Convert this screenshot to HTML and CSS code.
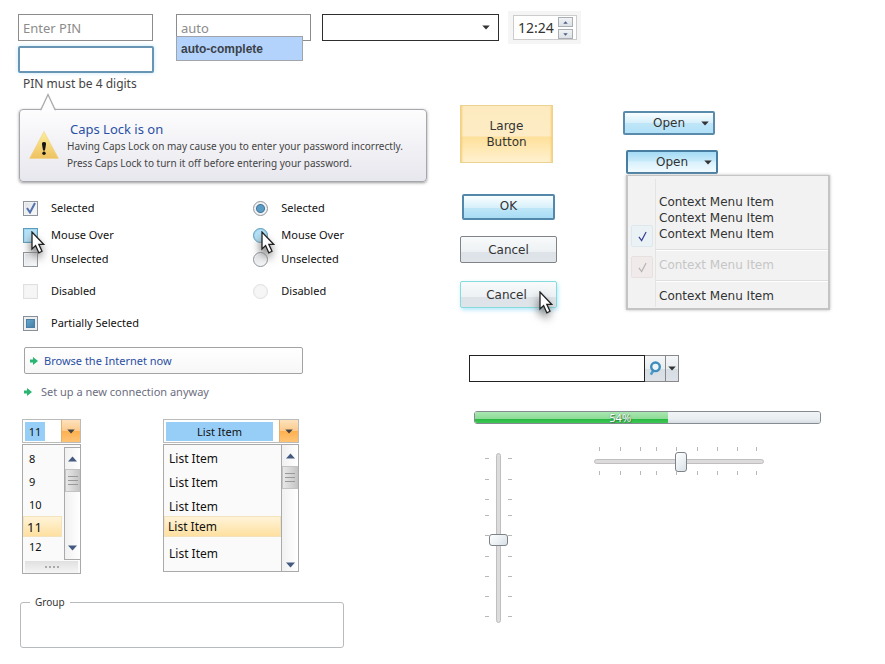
FILE: index.html
```html
<!DOCTYPE html>
<html lang="en">
<head>
<meta charset="utf-8">
<title>Interface controls</title>
<meta name="viewport" content="width=device-width, initial-scale=1">
<link rel="stylesheet" href="styles.css">
</head>
<body>
<svg class="defs" aria-hidden="true">
  <defs>
    <symbol id="down" viewBox="0 0 9 6"><path d="M0 .5h9L4.500 5.500z"/></symbol>
    <symbol id="up" viewBox="0 0 9 6"><path d="M0 5.500h9L4.500 .5z"/></symbol>
    <symbol id="cursor" viewBox="0 0 14 24"><path d="M1 1v17l3.600-3.500 3.200 7.300 3.200-1.500-3.200-7H12.600z" fill="#fff" stroke="#222" stroke-width="1.300"/></symbol>
    <symbol id="arrow" viewBox="0 0 8 8"><path d="M0 2.500h3V0L8 4 3 8V5.500H0z" fill="#2bb573"/></symbol>
    <symbol id="tick" viewBox="0 0 10 12"><path d="M1 6.500l3 4L9 1" fill="none" stroke="currentColor" stroke-width="1.300"/></symbol>
    <symbol id="bold-tick" viewBox="0 0 10 12"><path d="M1 6l3 4.500L9 1" fill="none" stroke="currentColor" stroke-width="2"/></symbol>
  </defs>
</svg>

<header class="top">
  <div class="pin">
    <input class="field" type="text" placeholder="Enter PIN" aria-label="PIN">
    <input class="field focused" id="pin" type="text" aria-describedby="hint" aria-label="PIN again">
    <label class="hint" id="hint" for="pin">PIN must be 4 digits</label>
  </div>
  <div class="auto">
    <input class="field" type="text" placeholder="auto" aria-label="Search word">
    <button class="suggestion" type="button">auto-complete</button>
  </div>
  <div class="combo">
    <select aria-label="Choice"><option></option></select>
    <svg class="caret"><use href="#down"/></svg>
  </div>
  <div class="time">
    <div class="time-box">
      <input type="text" value="12:24" aria-label="Time">
      <div class="spin">
        <button type="button" aria-label="Later"><svg><use href="#up"/></svg></button>
        <button type="button" aria-label="Earlier"><svg><use href="#down"/></svg></button>
      </div>
    </div>
  </div>
</header>

<main class="board">
  <div class="left">
    <section class="callout">
      <svg class="peak" viewBox="0 0 18 18" aria-hidden="true"><path d="M1 18L2 16.500 9 1.500 16 16.500 17 18z" fill="#fdfdfe"/><path d="M1 16.500h1L9 1.500l7 15h1" fill="none" stroke="#aaa" stroke-width="1.300"/></svg>
      <svg class="warning" viewBox="0 0 30 28" aria-hidden="true">
        <defs><linearGradient id="gold" x2="0" y2="1"><stop stop-color="#fbee9a"/><stop offset="1" stop-color="#efc160"/></linearGradient></defs>
        <path d="M15 .5L29.500 27.500H.5z" fill="url(#gold)" stroke="#efd384" stroke-width=".6"/>
        <path d="M15 11c2 0 2.200 1.300 1.900 3l-1 5.500h-1.800l-1-5.500c-.3-1.700-.1-3 1.900-3z" fill="#151515"/><circle cx="15" cy="22.300" r="1.700" fill="#151515"/>
      </svg>
      <div>
        <h2>Caps Lock is on</h2>
        <p>Having Caps Lock on may cause you to enter your password incorrectly.</p>
        <p>Press Caps Lock to turn it off before entering your password.</p>
      </div>
    </section>

    <div class="choices">
      <div class="choice-list">
        <label><span class="mark"><input type="checkbox" checked><svg class="check"><use href="#bold-tick"/></svg></span>Selected</label>
        <label class="near"><span class="mark"><input class="hover" type="checkbox"><svg class="cursor"><use href="#cursor"/></svg></span>Mouse Over</label>
        <label><span class="mark"><input type="checkbox"></span>Unselected</label>
        <label class="apart"><span class="mark"><input type="checkbox" disabled></span>Disabled</label>
        <label class="apart"><span class="mark"><input class="partial" type="checkbox"></span>Partially Selected</label>
      </div>
      <div class="choice-list">
        <label><span class="mark"><input type="radio" name="r" checked></span>Selected</label>
        <label class="near"><span class="mark"><input class="hover" type="radio" name="r"><svg class="cursor"><use href="#cursor"/></svg></span>Mouse Over</label>
        <label><span class="mark"><input type="radio" name="r"></span>Unselected</label>
        <label class="apart"><span class="mark"><input type="radio" name="r" disabled></span>Disabled</label>
      </div>
    </div>

    <a class="command boxed" href="#"><svg><use href="#arrow"/></svg>Browse the Internet now</a>
    <a class="command" href="#"><svg><use href="#arrow"/></svg>Set up a new connection anyway</a>

    <div class="lists">
      <div class="drop small">
        <div class="drop-head"><input type="text" value="11" aria-label="Size"><button type="button" aria-label="Show sizes"><svg><use href="#down"/></svg></button></div>
        <div class="panel">
          <div class="panel-body">
            <ul role="listbox" aria-label="Sizes">
              <li role="option">8</li><li role="option">9</li><li role="option">10</li><li role="option" class="chosen" aria-selected="true">11</li><li role="option">12</li>
            </ul>
            <div class="scroll"><button type="button" aria-label="Up"><svg><use href="#up"/></svg></button><span class="handle"></span><button class="end" type="button" aria-label="Down"><svg><use href="#down"/></svg></button></div>
          </div>
          <div class="grip"><i></i><i></i><i></i><i></i></div>
        </div>
      </div>
      <div class="drop wide">
        <div class="drop-head"><input type="text" value="List Item" aria-label="Item"><button type="button" aria-label="Show items"><svg><use href="#down"/></svg></button></div>
        <div class="panel">
          <div class="panel-body">
            <ul role="listbox" aria-label="Items">
              <li role="option">List Item</li><li role="option">List Item</li><li role="option">List Item</li><li role="option" class="chosen" aria-selected="true">List Item</li><li role="option">List Item</li>
            </ul>
            <div class="scroll"><button type="button" aria-label="Up"><svg><use href="#up"/></svg></button><span class="handle"></span><button class="end" type="button" aria-label="Down"><svg><use href="#down"/></svg></button></div>
          </div>
        </div>
      </div>
    </div>

    <fieldset class="group"><legend>Group</legend></fieldset>
  </div>

  <div class="right">
    <div class="actions">
      <div class="buttons">
        <button class="large" type="button">Large<br>Button</button>
        <button class="btn primary" type="button">OK</button>
        <button class="btn" type="button">Cancel</button>
        <button class="btn glow" type="button">Cancel<svg class="cursor"><use href="#cursor"/></svg></button>
      </div>
      <div class="menus">
        <button class="open" type="button">Open<svg class="caret"><use href="#down"/></svg></button>
        <div class="opened">
          <button class="open pressed" type="button">Open<svg class="caret"><use href="#down"/></svg></button>
          <ul class="menu">
            <li><button type="button">Context Menu Item</button></li>
            <li><button type="button">Context Menu Item</button></li>
            <li><span class="state"><svg><use href="#tick"/></svg></span><button type="button">Context Menu Item</button></li>
            <li class="rule"></li>
            <li><span class="state off"><svg><use href="#tick"/></svg></span><button type="button" disabled>Context Menu Item</button></li>
            <li class="rule"></li>
            <li><button type="button">Context Menu Item</button></li>
          </ul>
        </div>
      </div>
    </div>

    <form class="search">
      <input type="text" aria-label="Search">
      <button type="button" aria-label="Search"><svg class="lens" viewBox="0 0 12 15"><path d="M4.500 9.300L1.800 13.600" stroke="#4c9cc8" stroke-width="2.600"/><circle cx="6.500" cy="5.800" r="4.300" fill="#eef4f8" stroke="#3e8dbd" stroke-width="2.400"/></svg></button>
      <button class="more" type="button" aria-label="Search options"><svg class="caret"><use href="#down"/></svg></button>
    </form>

    <div class="meter"><progress value="56" max="100" aria-label="Progress"></progress><span>54%</span></div>

    <div class="sliders">
      <div class="vertical">
        <svg class="marks" viewBox="0 0 4 170"><path d="M0 5.500h4M0 26.500h4M0 46.500h4M0 62.500h4M0 82.500h4M0 103.500h4M0 123.500h4M0 143.500h4M0 163.500h4"/></svg>
        <input type="range" value="51" aria-label="Vertical level">
        <svg class="marks" viewBox="0 0 4 170"><path d="M0 5.500h4M0 26.500h4M0 46.500h4M0 62.500h4M0 82.500h4M0 103.500h4M0 123.500h4M0 143.500h4M0 163.500h4"/></svg>
      </div>
      <div class="horizontal">
        <svg class="marks" viewBox="0 0 170 4"><path d="M5.500 0v4M26.500 0v4M46.500 0v4M62.500 0v4M82.500 0v4M103.500 0v4M123.500 0v4M143.500 0v4M162.500 0v4"/></svg>
        <input type="range" value="51" aria-label="Horizontal level">
        <svg class="marks" viewBox="0 0 170 4"><path d="M5.500 0v4M26.500 0v4M46.500 0v4M62.500 0v4M82.500 0v4M103.500 0v4M123.500 0v4M143.500 0v4M162.500 0v4"/></svg>
      </div>
    </div>
  </div>
</main>
</body>
</html>
```
FILE: styles.css
```css
* { box-sizing: border-box; }

body {
  margin: 0;
  background: #fff;
  color: #333;
  font: 11px/16px "Noto Sans", "Open Sans", sans-serif;
}

button, input, select { margin: 0; padding: 0; font: inherit; color: inherit; border-radius: 0; }
input:focus { outline: none; }
h2, p, ul { margin: 0; padding: 0; }
ul { list-style: none; }
svg { display: block; flex: none; }
.defs { position: absolute; width: 0; height: 0; }
.caret { width: 8px; height: 5px; fill: #333; }

/* Top row of text fields */
.top { display: flex; align-items: flex-start; padding: 14px 18px 0; }
.pin { display: flex; flex-direction: column; gap: 5px; width: 136px; margin-right: 22px; }
.field {
  width: 135px; height: 27px; padding: 0 4px;
  border: 1px solid #8c8c8c; background: #fff; font-size: 13px;
}
.field::placeholder { color: #8c8c8c; opacity: 1; }
.focused { width: 136px; border: 2px solid #6795b3; border-radius: 2px; box-shadow: 0 0 4px #c5e8fa; }
.hint { height: 14px; padding-left: 5px; line-height: 12px; font-size: 12px; color: #444; }
.auto { position: relative; margin-right: 11px; }
.suggestion {
  position: absolute; top: 22px; left: 0; width: 127px; height: 25px; padding: 0 4px;
  border: 1px solid #a0a5ac; background: #b3d3fd; color: #3b4147;
  font: bold 12px/16px "Liberation Sans", Arial, sans-serif; text-align: left;
}
.combo { display: grid; width: 177px; margin-right: 9px; align-items: center; }
.combo > * { grid-area: 1 / 1; }
.combo select { height: 27px; border: 1px solid #2e2e2e; background: #fff; appearance: none; }
.combo .caret { justify-self: end; margin-right: 9px; pointer-events: none; }
.time { margin-top: -3px; padding: 4px 4px 4px 5px; background: #f5f5f5; }
.time-box { display: flex; width: 64px; height: 25px; border: 1px solid #ccc; background: #fff; }
.time-box input { width: 44px; padding-left: 4px; border: 0; background: none; font-size: 14px; }
.spin { display: flex; flex-direction: column; gap: 2px; padding-top: 1px; }
.spin button {
  display: grid; place-items: center; width: 15px; height: 10px;
  border: 1px solid #a9aeb4; background: linear-gradient(#f1f3f5, #dce1e6);
}
.spin svg { width: 5px; height: 3px; fill: #4b5e83; }

.board { display: grid; grid-template-columns: minmax(0, 440fr) minmax(0, 445fr); }
.left { padding: 17px 13px 0 19px; }
.right { padding: 13px 20px 0; }

/* Balloon */
.callout {
  position: relative; display: flex; gap: 8px; height: 73px; padding: 11px 9px;
  border: 1px solid #a6a6ad; border-radius: 4px; color: #444;
  background: linear-gradient(#fdfdfe, #e7e7ee); box-shadow: 0 1px 3px #999;
}
.peak { position: absolute; top: -17px; left: 19px; width: 18px; height: 18px; }
.warning { width: 30px; height: 28px; margin-top: 10px; }
.callout h2 { padding-left: 3px; color: #2a50a5; font-size: 13px; line-height: 17px; font-weight: normal; }
.callout p { font-size: 10px; line-height: 17px; }

/* Check boxes and radio buttons */
.choices { display: grid; grid-template-columns: 57% 1fr; padding: 18px 0 0 4px; }
.choice-list { display: flex; flex-direction: column; gap: 8px; }
.choice-list label { display: flex; align-items: center; gap: 13px; height: 16px; color: #111; }
.choice-list .near { margin-top: 3px; }
.choice-list .apart { margin-top: 8px; }
.mark { position: relative; display: grid; place-items: center; }
.mark > * { grid-area: 1 / 1; }
.mark input {
  width: 15px; height: 15px; appearance: none; border: 1px solid #8f959c;
  background: linear-gradient(135deg, #dfe2e6, #fafafa); box-shadow: inset 0 0 0 1px #f3f3f3;
}
.mark input[type="radio"] { border-radius: 50%; }
.mark input[type="radio"]:checked { background: radial-gradient(circle, #5b9cc6 3px, #44769a 4px, #eceff1 5px); }
.mark input.hover { border-color: #5d9cbd; background: #b5e3f9; box-shadow: inset 0 0 0 1px #a5d8f0; }
.mark input:disabled { border-color: #e0e0e0; background: #f6f6f6; }
.mark input.partial { border-color: #85909a; background: linear-gradient(135deg, #75b6da, #336f9a); box-shadow: inset 0 0 0 2px #eee, inset 0 0 0 3px #4a7ea3; }
.check { width: 10px; height: 12px; color: #5273ad; pointer-events: none; }
.cursor { position: absolute; z-index: 1; width: 14px; height: 24px; filter: drop-shadow(-1px 5px 4px #777); pointer-events: none; }
.mark .cursor { top: 3px; left: 8px; }

/* Command links */
.command {
  display: flex; align-items: center; gap: 9px; width: 279px; height: 16px; margin: 10px 0 0 5px;
  color: #6d6d80; text-decoration: none;
}
.command svg { width: 8px; height: 8px; }
.boxed {
  gap: 6px; height: 27px; margin-top: 16px; padding: 0 5px; color: #2a4fa3;
  border: 1px solid #a3a3a3; border-radius: 2px; background: linear-gradient(#fff, #f7f7f7);
}

/* Drop-down lists */
.lists { display: flex; align-items: flex-start; gap: 82px; padding: 19px 0 0 3px; color: #111; }
.drop { display: flex; flex-direction: column; gap: 1px; }
.small { width: 59px; }
.wide { width: 136px; }
.drop-head { display: flex; height: 24px; border: 1px solid #bbb; background: #fff; }
.drop-head input { width: 20px; height: 19px; margin: 2px auto 0 2px; border: 0; background: #97cef8; text-align: center; }
.wide .drop-head input { width: 107px; }
.drop-head button {
  display: grid; place-items: center; width: 19px; border: 0; border-left: 1px solid #e3b06f;
  background: linear-gradient(#fde2bd, #fcc98b 50%, #fdb04f 51%, #ffc476);
}
.drop svg { width: 8px; height: 5px; fill: #444; }
.panel { border: 1px solid #aaa; background: #fafafa; }
.panel-body { display: flex; }
.panel ul { flex: 1; padding-top: 2px; font-size: 12px; }
.panel li { display: flex; align-items: center; height: 24px; padding-left: 5px; }
.panel .chosen { height: 21px; padding-left: 3px; border: 1px solid #f3e3bd; background: linear-gradient(#fff3d8, #fee0a0); }
.small ul { padding-bottom: 3px; font-size: 11px; }
.small li { height: 23px; padding-left: 6px; }
.small .chosen { margin-right: 2px; font-size: 13px; }
.small li:last-child { height: 20px; }
.wide .chosen { margin-top: -3px; }
.wide li:last-child { height: 34px; }
.scroll { display: flex; flex-direction: column; width: 17px; border-left: 1px solid #aaa; background: linear-gradient(90deg, #f1f1f1, #fff); }
.small .scroll { width: 16px; margin-top: 2px; border: 1px solid #aaa; border-right: 0; }
.scroll button { display: grid; place-items: center; height: 21px; border: 0; background: none; }
.scroll svg { width: 9px; height: 6px; fill: #445a80; }
.handle {
  height: 23px; border: 1px solid #c3c3c3;
  background: repeating-linear-gradient(#999 0 1px, transparent 1px 4px) 50% 6px / 10px 9px no-repeat, linear-gradient(90deg, #e8e8e8, #c6c6c6);
}
.scroll .end { height: 12px; margin-top: auto; }
.small .scroll .end { height: 22px; }
.grip { display: flex; justify-content: center; align-items: center; gap: 2px; height: 12px; margin: 1px 2px 0; background: linear-gradient(#e0e0e0, #f5f5f5); }
.grip i { width: 2px; height: 2px; background: #aaa; }

.group { width: 324px; height: 54px; margin: 20px 0 16px 1px; padding: 0 9px; border: 1px solid #b8bbbd; border-radius: 3px; }
.group legend { padding: 0 5px; font-size: 10px; }

/* Buttons */
.actions { display: grid; grid-template-columns: 163px 1fr; font: 12px/16px "DejaVu Sans", sans-serif; }
.buttons { display: flex; flex-direction: column; align-items: flex-start; }
.large {
  width: 93px; height: 58px; border: 1px solid #ecd28f; line-height: 16px;
  background: linear-gradient(#fdeac0, #fdecc5 30px, #fee09a 31px, #fff1d0);
  box-shadow: inset 3px 0 2px -2px #f7cd73, inset -3px 0 2px -2px #f7cd73;
}
.btn {
  position: relative; width: 97px; height: 27px; margin-top: 17px; border: 1px solid #808488; border-radius: 2px;
  background: linear-gradient(#f8fafb, #edf1f3 60%, #dde3e8 61%, #dfe4e9);
}
.primary {
  width: 93px; height: 26px; margin: 31px 0 0 2px; padding-bottom: 3px; border: 2px solid #5488ab;
  background: linear-gradient(#fafeff, #d5effa 55%, #bfe6f8 56%, #a8dcf5);
}
.buttons .primary + .btn { margin-top: 16px; }
.glow { margin-top: 18px; border-color: #86dcdc; padding-right: 4px; box-shadow: 1px 2px 4px #b5e6fb; }
.btn .cursor { top: 9px; left: 78px; }
.menus { display: flex; flex-direction: column; align-items: flex-start; gap: 15px; padding-top: 6px; }
.open {
  display: flex; align-items: center; justify-content: flex-end; gap: 16px; width: 92px; height: 24px; padding-right: 4px;
  border: 2px solid #5a8baa; border-radius: 2px;
  background: linear-gradient(#fafeff, #d5effa 50%, #bfe6f8 52%, #b1e0f7);
}
.pressed { background: linear-gradient(#a4dbf5, #c8eaf9 45%, #d8f1fc 50%, #f2fbff); border-color: #477da0; }
.opened { position: relative; margin-left: 3px; }
.menu {
  position: relative; width: 204px; margin-top: 1px; padding: 18px 0 4px 28px;
  border: 1px solid #c4c4c4; border-width: 1px 2px 2px; background: linear-gradient(#e4e4e4, #e4e4e4) 27px 3px / 1px 128px no-repeat #f2f2f2;
  box-shadow: 0 0 3px #bbb;
}
.menu li { position: relative; height: 16px; padding-left: 3px; }
.menu button { border: 0; background: none; line-height: 16px; }
.menu button:disabled { color: #c6c6c6; }
.menu .rule { height: 1px; margin: 7px 0; background: #dfdfdf; box-shadow: 0 1px #fff; }
.state { position: absolute; top: -1px; left: -25px; display: grid; place-items: center; width: 22px; height: 22px; border: 1px solid #dce8ee; border-radius: 2px; background: #ebf2f6; color: #343d94; }
.state svg { width: 9px; height: 11px; }
.off { border-color: #e8e0de; background: #f0ebea; color: #b4b4b4; }

/* Search box and progress */
.search { display: flex; width: 210px; height: 27px; margin: 45px 0 0 9px; }
.search input { flex: 1; min-width: 0; border: 1px solid #222; background: #fff; }
.search button { display: grid; place-items: center; width: 21px; border: 1px solid #888; border-left: 0; background: linear-gradient(#f5f7f8, #e8edf0 50%, #d6dde3 51%, #dce2e7); }
.search .more { width: 13px; }
.lens { width: 12px; height: 15px; }
.meter { position: relative; width: 347px; height: 13px; margin: 29px 0 0 14px; }
.meter progress { display: block; width: 100%; height: 13px; appearance: none; border: 1px solid #858b90; border-radius: 3px; overflow: hidden; }
.meter progress::-webkit-progress-bar { background: linear-gradient(#f1f4f6, #e9eef1 60%, #d7dee3); }
.meter progress::-webkit-progress-value { background: linear-gradient(#a9e8b1, #8fdb98 60%, #28b641 61%, #3cc854); }
.meter span { position: absolute; top: 0; left: 39%; line-height: 13px; color: #fff; text-shadow: 1px 1px 1px #3c7d46, 0 0 1px #3c7d46; }

/* Sliders */
.sliders { display: flex; align-items: flex-start; gap: 82px; padding: 23px 0 0 25px; }
.marks { stroke: #b8b8b8; }
.vertical, .horizontal { display: flex; justify-content: space-between; }
.vertical { width: 27px; margin-top: 6px; }
.vertical .marks { width: 4px; height: 170px; }
.horizontal { flex-direction: column; height: 28px; }
.horizontal .marks { width: 170px; height: 4px; }
.sliders input { appearance: none; background: none; }
.vertical input { writing-mode: vertical-lr; width: 19px; height: 170px; }
.horizontal input { width: 170px; height: 20px; }
.sliders input::-webkit-slider-runnable-track { border: 1px solid #bfbfbf; border-radius: 3px; background: #dedbdc; }
.horizontal input::-webkit-slider-runnable-track { height: 5px; }
.vertical input::-webkit-slider-runnable-track { width: 5px; }
.sliders input::-webkit-slider-thumb { appearance: none; border: 1px solid #7d8287; border-radius: 3px; background: linear-gradient(135deg, #fff, #d8e2e8); }
.horizontal input::-webkit-slider-thumb { width: 12px; height: 20px; margin-top: -8px; }
.vertical input::-webkit-slider-thumb { width: 19px; height: 12px; margin-left: -8px; }
```
